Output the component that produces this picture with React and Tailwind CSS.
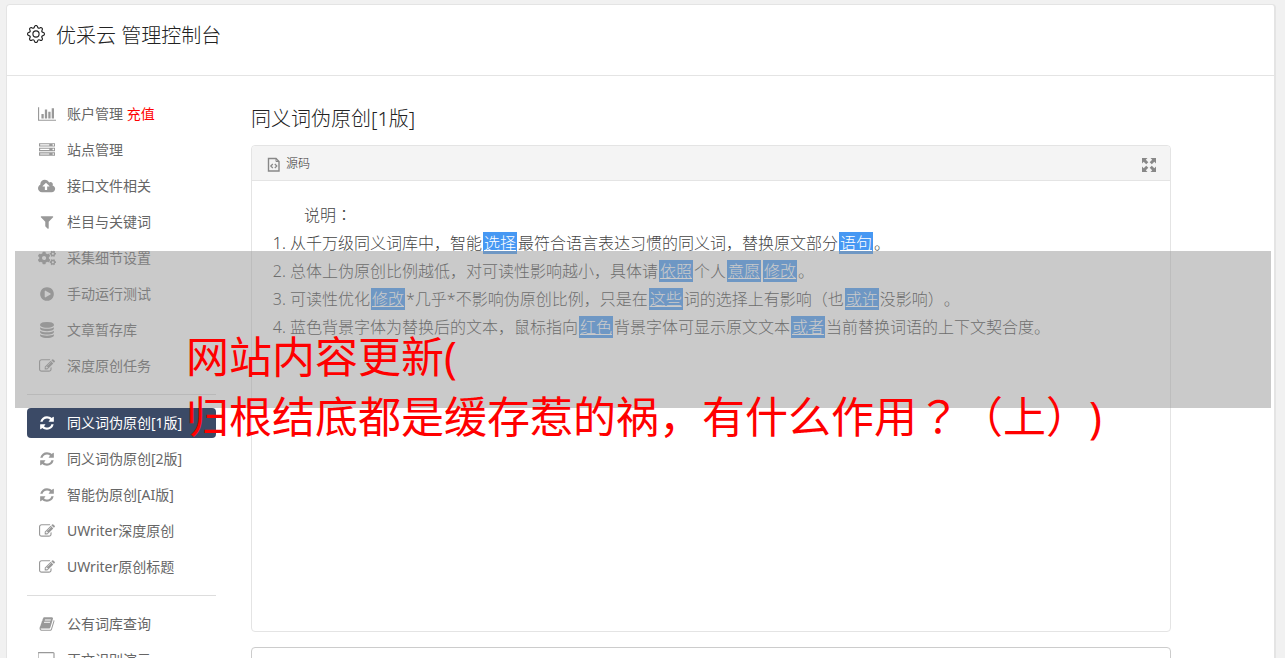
import { BsGear } from 'react-icons/bs'
import { FaCogs } from 'react-icons/fa'

const ICONS = {
  chart: {
    w: 2048,
    d: 'M640 896v512h-256v-512h256zm384-512v1024h-256v-1024h256zm1024 1152v128h-2048v-1536h128v1408h1920zm-640-896v768h-256v-768h256zm384-384v1152h-256v-1152h256z',
  },
  server: {
    w: 1792,
    d: 'M128 1408h1024v-128h-1024v128zm0-512h1024v-128h-1024v128zm1568 448q0-40-28-68t-68-28-68 28-28 68 28 68 68 28 68-28 28-68zm-1568-960h1024v-128h-1024v128zm1568 448q0-40-28-68t-68-28-68 28-28 68 28 68 68 28 68-28 28-68zm0-512q0-40-28-68t-68-28-68 28-28 68 28 68 68 28 68-28 28-68zm96 832v384h-1792v-384h1792zm0-512v384h-1792v-384h1792zm0-512v384h-1792v-384h1792z',
  },
  upload: {
    w: 1920,
    d: 'M1280 928q0-14-9-23l-352-352q-9-9-23-9t-23 9l-351 351q-10 12-10 24 0 14 9 23t23 9h224v352q0 13 9.5 22.5t22.5 9.5h192q13 0 22.5-9.5t9.5-22.5v-352h224q13 0 22.5-9.5t9.5-22.5zm640 288q0 159-112.5 271.5t-271.5 112.5h-1088q-185 0-316.5-131.5t-131.5-316.5q0-130 70-240t188-165q-2-30-2-43 0-212 150-362t362-150q156 0 285.5 87t188.5 231q71-62 166-62 106 0 181 75t75 181q0 76-41 138 130 31 213.5 135.5t83.5 238.5z',
  },
  filter: {
    w: 1792,
    d: 'M1595 295q17 41-14 70l-493 493v742q0 42-39 59-13 5-25 5-27 0-45-19l-256-256q-19-19-19-45v-486l-493-493q-31-29-14-70 17-39 59-39h1280q42 0 59 39z',
  },
  play: {
    w: 1792,
    d: 'M896 128q209 0 385.5 103t279.5 279.5 103 385.5-103 385.5-279.5 279.5-385.5 103-385.5-103-279.5-279.5-103-385.5 103-385.5 279.5-279.5 385.5-103zm384 823q32-18 32-55t-32-55l-544-320q-31-19-64-1-32 19-32 56v640q0 37 32 56 16 8 32 8 17 0 32-9z',
  },
  database: {
    w: 1792,
    d: 'M896 768q237 0 443-43t325-127v170q0 69-103 128t-280 93.5-385 34.5-385-34.5-280-93.5-103-128v-170q119 84 325 127t443 43zm0 768q237 0 443-43t325-127v170q0 69-103 128t-280 93.5-385 34.5-385-34.5-280-93.5-103-128v-170q119 84 325 127t443 43zm0-384q237 0 443-43t325-127v170q0 69-103 128t-280 93.5-385 34.5-385-34.5-280-93.5-103-128v-170q119 84 325 127t443 43zm0-1152q208 0 385 34.5t280 93.5 103 128v128q0 69-103 128t-280 93.5-385 34.5-385-34.5-280-93.5-103-128v-128q0-69 103-128t280-93.5 385-34.5z',
  },
  edit: {
    w: 1792,
    d: 'M888 1184l116-116-152-152-116 116v56h96v96h56zm440-720q-16-16-33 1l-350 350q-17 17-1 33t33-1l350-350q17-17 1-33zm80 594v190q0 119-84.5 203.5t-203.5 84.5h-832q-119 0-203.5-84.5t-84.5-203.5v-832q0-119 84.5-203.5t203.5-84.5h832q63 0 117 25 15 7 18 23 3 17-9 29l-49 49q-14 14-32 8-23-6-45-6h-832q-66 0-113 47t-47 113v832q0 66 47 113t113 47h832q66 0 113-47t47-113v-126q0-13 9-22l64-64q15-15 35-7t20 29zm-96-738l288 288-672 672h-288v-288zm444 132l-92 92-288-288 92-92q28-28 68-28t68 28l152 152q28 28 28 68t-28 68z',
  },
  refresh: {
    w: 1792,
    d: 'M1639 1056q0 5-1 7-64 268-268 434.5t-478 166.5q-146 0-282.5-55t-243.5-157l-129 129q-19 19-45 19t-45-19-19-45v-448q0-26 19-45t45-19h448q26 0 45 19t19 45-19 45l-137 137q71 66 161 102t187 36q134 0 250-65t186-179q11-17 53-117 8-23 30-23h192q13 0 22.5 9.5t9.5 22.5zm25-800v448q0 26-19 45t-45 19h-448q-26 0-45-19t-19-45 19-45l138-138q-148-137-349-137-134 0-250 65t-186 179q-11 17-53 117-8 23-30 23h-199q-13 0-22.5-9.5t-9.5-22.5v-7q65-268 270-434.5t480-166.5q146 0 284 55.5t245 156.5l130-129q19-19 45-19t45 19 19 45z',
  },
  book: {
    w: 1792,
    d: 'M1703 478q40 57 18 129l-275 906q-19 64-76.5 107.5t-122.5 43.5h-923q-77 0-148.5-53.5t-99.5-131.5q-24-67-2-127 0-4 3-27t4-37q1-8-3-21.5t-3-19.5q2-11 8-21t16.5-23.5 16.5-23.5q23-38 45-91.5t30-91.5q3-10 .5-30t-.5-28q3-11 17-28t17-23q21-36 42-92t25-90q1-9-2.5-32t.5-28q4-13 22-30.5t22-22.5q19-26 42.5-84.5t27.5-96.5q1-8-3-25.5t-2-26.5q2-8 9-18t18-23 17-21q8-12 16.5-30.5t15-35 16-36 19.5-32 26.5-23.5 36-11.5 47.5 5.5l-1 3q38-9 51-9h761q74 0 114 56t18 130l-274 906q-36 119-71.5 153.5t-128.5 34.5h-869q-27 0-38 15-11 16-1 43 24 70 144 70h923q29 0 56-15.5t35-41.5l300-987q7-22 5-57 38 15 59 43zm-1064 2q-4 13 2 22.5t20 9.5h608q13 0 25.5-9.5t16.5-22.5l21-64q4-13-2-22.5t-20-9.5h-608q-13 0-25.5 9.5t-16.5 22.5zm-83 256q-4 13 2 22.5t20 9.5h608q13 0 25.5-9.5t16.5-22.5l21-64q4-13-2-22.5t-20-9.5h-608q-13 0-25.5 9.5t-16.5 22.5z',
  },
  desktop: {
    w: 1920,
    d: 'M1728 992v-832q0-13-9.5-22.5t-22.5-9.5h-1600q-13 0-22.5 9.5t-9.5 22.5v832q0 13 9.5 22.5t22.5 9.5h1600q13 0 22.5-9.5t9.5-22.5zm128-832v1088q0 66-47 113t-113 47h-544q0 37 16 77.5t32 71 16 43.5q0 26-19 45t-45 19h-512q-26 0-45-19t-19-45q0-14 16-44t32-70 16-78h-544q-66 0-113-47t-47-113v-1088q0-66 47-113t113-47h1600q66 0 113 47t47 113z',
  },
}

const MENU = [
  [
    { icon: 'chart', label: '账户管理', extra: '充值' },
    { icon: 'server', label: '站点管理' },
    { icon: 'upload', label: '接口文件相关' },
    { icon: 'filter', label: '栏目与关键词' },
    { icon: 'cogs', label: '采集细节设置' },
    { icon: 'play', label: '手动运行测试' },
    { icon: 'database', label: '文章暂存库' },
    { icon: 'edit', label: '深度原创任务' },
  ],
  [
    { icon: 'refresh', label: '同义词伪原创[1版]', active: true },
    { icon: 'refresh', label: '同义词伪原创[2版]' },
    { icon: 'refresh', label: '智能伪原创[AI版]' },
    { icon: 'edit', label: 'UWriter深度原创' },
    { icon: 'edit', label: 'UWriter原创标题' },
  ],
  [
    { icon: 'book', label: '公有词库查询' },
    { icon: 'desktop', label: '正文识别演示' },
  ],
]

export default function App() {
  return (
    <div className="relative h-screen overflow-hidden bg-[#f1f1f1] pt-1 pl-1.5 pr-[9px] font-light text-[#555] font-['Noto_Sans','Noto_Sans_CJK_SC',sans-serif] [text-spacing-trim:space-all]">
      <div className="min-h-full rounded-t border border-r-2 border-[#e4e4e4] bg-white">
        <header className="flex items-center gap-[11px] border-b border-[#e4e4e4] pt-4 pb-6 pl-5 text-[#222]">
          <BsGear size={18} className="mb-1" />
          <h1 className="text-[20px] leading-[30px]">优采云 管理控制台</h1>
        </header>

        <div className="flex">
          <nav className="ml-5 mt-[23px] w-[189px] shrink-0">
            {MENU.map((group, i) => (
              <div key={i}>
                {i > 0 && <hr className="my-[13px] border-[#ddd]" />}
                <ul className="flex flex-col gap-1.5">
                  {group.map((item) => (
                    <NavItem key={item.label} {...item} />
                  ))}
                </ul>
              </div>
            ))}
          </nav>

          <main className="ml-[35px] mr-[103px] mt-[29px] min-w-0 flex-1">
            <h2 className="text-[20px] leading-[28px] text-[#222]">同义词伪原创[1版]</h2>

            <section className="mt-3 rounded border border-[#e4e4e4]">
              <div className="flex h-[35px] items-center justify-between rounded-t border-b border-[#e4e4e4] bg-[#f4f4f4] pt-0.5 pl-[15px] pr-[13px] text-[12px] text-[#333]">
                <button className="flex items-center gap-[5px]">
                  <SourceIcon />
                  源码
                </button>
                <button aria-label="全屏">
                  <ExpandIcon />
                </button>
              </div>

              <div className="h-[450px] px-5 pt-5 text-[16px] leading-[28px] text-[#444]">
                <p className="indent-8">
                  说明<Mark>：</Mark>
                </p>
                <ol className="list-decimal pl-[18px]">
                  <li>
                    从千万级同义词库中，智能<Word>选择</Word>最符合语言表达习惯的同义词，替换原文部分<Word>语句</Word>。
                  </li>
                  <li>
                    总体上伪原创比例越低，对可读性影响越小，具体请<Word>依照</Word>个人<Word>意愿</Word><Word>修改</Word>。
                  </li>
                  <li>
                    可读性优化<Word>修改</Word>*几乎*不影响伪原创比例，只是在<Word>这些</Word>词的选择上有影响（也<Word>或许</Word>没影响）。
                  </li>
                  <li>
                    蓝色背景字体为替换后的文本，鼠标指向<Word>红色</Word>背景字体可显示原文文本<Word>或者</Word>当前替换词语的上下文契合度。
                  </li>
                </ol>
              </div>
            </section>

            <textarea aria-label="原文" className="mt-[15px] block h-[200px] w-full resize-none rounded border border-[#ccc] p-2" />
          </main>
        </div>
      </div>

      {/* Caption banner */}
      <div className="absolute left-[15px] right-[14px] top-[251px] h-[157px] bg-[#969696]/50" />
      <p className="absolute left-[186px] top-[327px] whitespace-nowrap text-[43px] leading-[60px] font-normal text-[#f00]">
        网站内容更新(
        <br />
        归根结底都是缓存惹的祸，有什么作用<Mark>？</Mark>（上）)
      </p>
    </div>
  )
}

function NavItem({ icon, label, extra, active }) {
  return (
    <li>
      <a
        href="#"
        className={`flex h-[30px] items-center gap-2.5 rounded px-2.5 text-[14px] font-normal ${active ? 'bg-[#3b4a66] text-white' : 'text-[#666]'}`}
      >
        <span className={`flex w-5 justify-center ${active ? 'text-white' : 'text-[#999]'}`}>
          <MenuIcon name={icon} />
        </span>
        <span className="pb-0.5">
          {label}
          {extra && <span className="text-[#f00]"> {extra}</span>}
        </span>
      </a>
    </li>
  )
}

function MenuIcon({ name }) {
  if (name === 'cogs') return <FaCogs size={18} />
  const { w, d } = ICONS[name]
  return (
    <svg viewBox={`0 0 ${w} 1792`} className="h-4 w-auto" fill="currentColor">
      <path d={d} />
    </svg>
  )
}

function Word({ children }) {
  return (
    <a href="#" className="mx-px bg-[#4698f3] px-px text-white underline">
      {children}
    </a>
  )
}

// full-width marks centred in their cell
function Mark({ children }) {
  return <span className="leading-none font-['Noto_Sans_CJK_JP',sans-serif]">{children}</span>
}

function SourceIcon() {
  return (
    <svg width="14" height="16" viewBox="0 0 14 16" fill="none" stroke="#888">
      <path d="M1.500 2.500h7.500l3 3v9.500H1.500z" strokeWidth="1.4" />
      <path d="M9 2.500v3h3" />
      <path d="M5.800 8L3.800 10l2 2M7.800 8l2 2-2 2" strokeWidth="1.2" />
    </svg>
  )
}

function ExpandIcon() {
  return (
    <svg width="16" height="16" viewBox="0 0 16 16" fill="#888">
      <path d="M1 2h5.500L4.800 3.700 7.300 6.200 5.200 8.300 2.700 5.800 1 7.500zM15 2v5.500L13.300 5.800 10.800 8.300 8.700 6.200 11.200 3.700 9.500 2zM1 16v-5.500l1.700 1.700 2.500-2.500 2.100 2.100-2.500 2.500L6.500 16zM15 16H9.500l1.700-1.700-2.500-2.500 2.100-2.100 2.500 2.500L15 10.500z" />
    </svg>
  )
}
